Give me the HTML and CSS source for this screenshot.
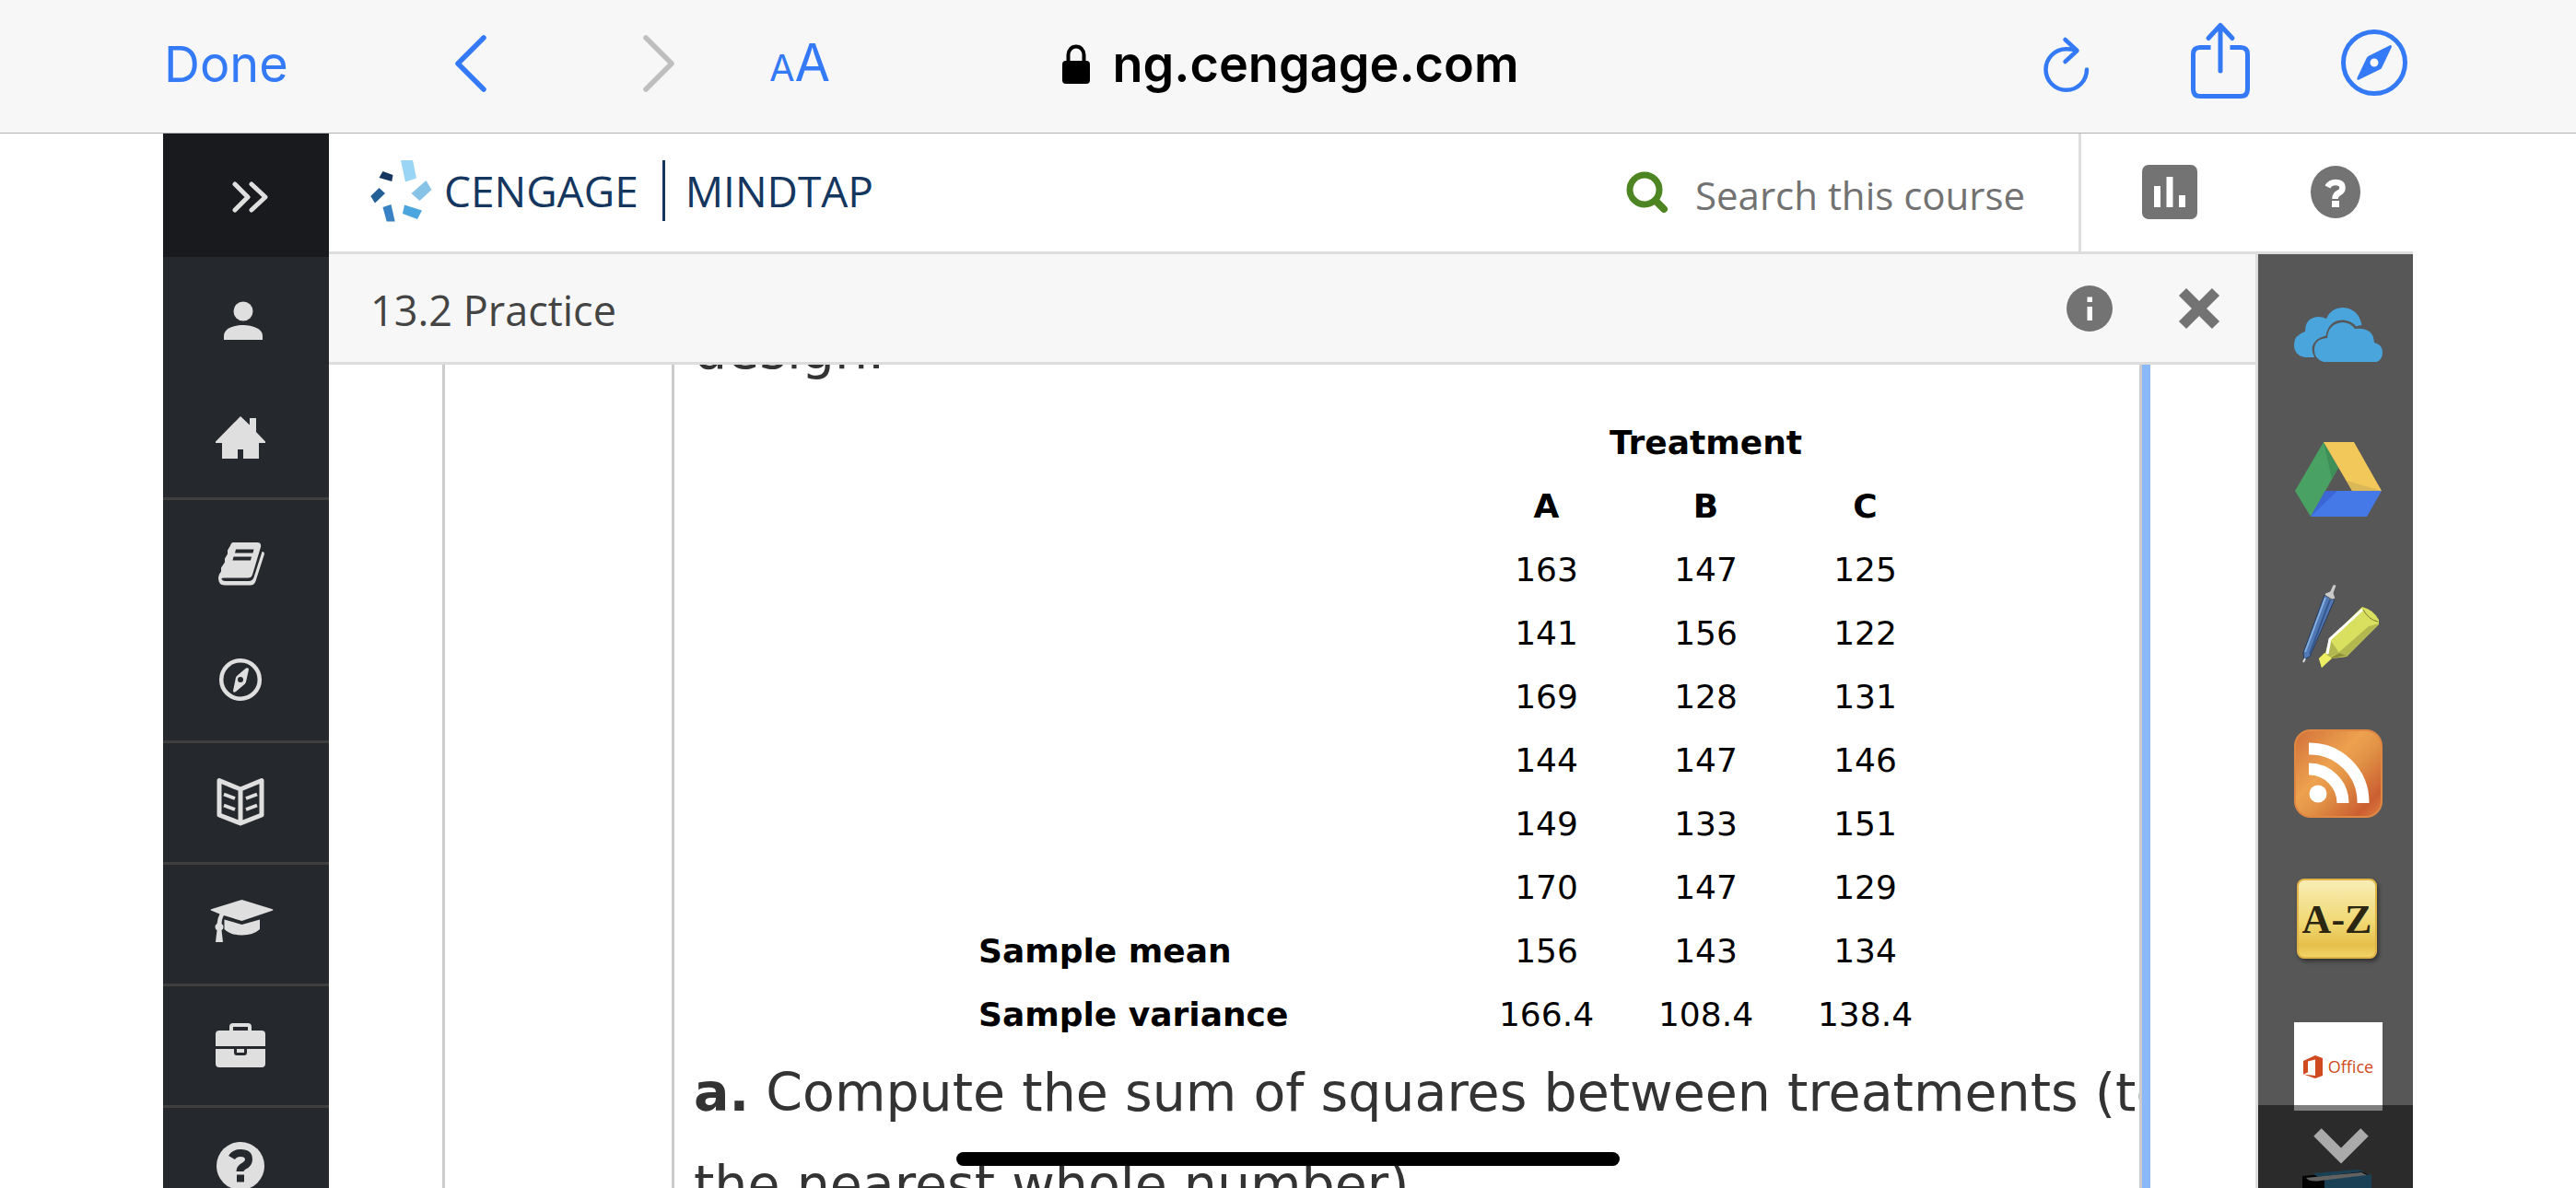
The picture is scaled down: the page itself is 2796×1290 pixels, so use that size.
FILE: index.html
```html
<!DOCTYPE html>
<html lang="en">
<head>
<meta charset="utf-8">
<meta name="viewport" content="width=device-width, initial-scale=1">
<title>13.2 Practice</title>
<link rel="stylesheet" href="styles.css">
</head>
<body>
<div class="screen">
  <header class="browser-bar">
    <div class="browser-left">
      <button class="bar-button done" type="button">Done</button>
      <button class="bar-button back" type="button" aria-label="Back">
        <svg width="40" height="66" viewBox="0 0 40 66"><path d="M35 5L7 33l28 28" fill="none" stroke="currentColor" stroke-width="5.500" stroke-linecap="round" stroke-linejoin="round"/></svg>
      </button>
      <button class="bar-button forward" type="button" aria-label="Forward" disabled>
        <svg width="40" height="66" viewBox="0 0 40 66"><path d="M6 5l28 28L6 61" fill="none" stroke="currentColor" stroke-width="5.500" stroke-linecap="round" stroke-linejoin="round"/></svg>
      </button>
      <button class="bar-button text-size" type="button" aria-label="Text size"><span class="small-a">A</span>A</button>
    </div>
    <div class="address">
      <svg width="30" height="44" viewBox="0 0 30 44"><path d="M6.500 20V11.500a8.500 9 0 0 1 17 0V20" fill="none" stroke="#000" stroke-width="4"/><rect y="18" width="30" height="25" rx="4"/></svg>
      <span>ng.cengage.com</span>
    </div>
    <div class="browser-right">
      <button class="bar-button" type="button" aria-label="Reload">
        <svg width="50" height="82" viewBox="0 0 50 82" fill="none" stroke="currentColor" stroke-width="4.500" stroke-linecap="round" stroke-linejoin="round"><path d="M47 47.500A22.250 22.250 0 1 1 24.750 25.250q6 0 11 1.250"/><path d="M23.500 15L36.500 27 23.500 39"/></svg>
      </button>
      <button class="bar-button share" type="button" aria-label="Share">
        <svg width="64" height="82" viewBox="0 0 64 82" fill="none" stroke="currentColor" stroke-width="5" stroke-linecap="round" stroke-linejoin="round"><path d="M21.500 23.500H10q-7.500 0-7.500 7.500v38q0 7.500 7.500 7.500h44q7.500 0 7.500-7.500V31q0-7.500-7.500-7.500H42.500" stroke-linecap="butt"/><path d="M32 49V-.5M19 13.500L32-.5l13 14"/></svg>
      </button>
      <button class="bar-button" type="button" aria-label="Open in Safari">
        <svg width="74" height="74" viewBox="0 0 74 74"><circle cx="37" cy="36" r="33.500" fill="none" stroke="currentColor" stroke-width="5"/><path fill="currentColor" fill-rule="evenodd" d="M54.500 17q2 0 1.200 2.500L45 42 44 43 20.500 54.500q-3 1-2-2L29 30.500l1.500-1.500zM37 31.500a4.500 4.500 0 1 0 0 9a4.500 4.500 0 0 0 0-9z"/></svg>
      </button>
    </div>
  </header>

  <div class="app">
    <nav class="sidebar" aria-label="Course">
      <button class="side-toggle" type="button" aria-label="Expand menu">
        <svg width="42" height="36" viewBox="0 0 42 36" fill="none" stroke="currentColor" stroke-width="5" stroke-linecap="round" stroke-linejoin="round"><path d="M4 4l14 14L4 32M22 4l15 14-15 14"/></svg>
      </button>
      <a class="side-item" href="#profile" aria-label="Profile"><svg viewBox="0 0 72 72"><circle cx="39" cy="29" r="10.500"/><path d="M18 60v-4.500C18 48 29 44 39 44s21 4 21 11.500V60z"/></svg></a>
      <a class="side-item ruled" href="#home" aria-label="Home"><svg viewBox="0 0 72 72"><path d="M36 12l10 9.500V14h7v15l10 10.500V41h-7v17H39V48h-6v10H16V41H9v-1.500z"/></svg></a>
      <a class="side-item" href="#book" aria-label="Book"><svg viewBox="0 0 72 72"><path fill-rule="evenodd" d="M28 16h26q5 0 4 5L49 51q-1 3.500-5 3.500H18q-3 0-2.500 1.500 1 2 4 2H45q4 0 5.500-4L59.500 26q2.500-.5 2.500 2.500L52.500 58q-1.500 4.500-6 4.500H19q-7 0-7-8 0-1 1-4l2-3v-4l4-6v-4l3-5v-4l3-5q1-3.500 3-3.500zM31 23.500l-1 4h19.500l1-4zm-2.500 8l-1 4H47l1-4z"/></svg></a>
      <a class="side-item ruled" href="#explore" aria-label="Explore"><svg viewBox="0 0 72 72"><circle cx="36" cy="34" r="20.800" fill="none" stroke="currentColor" stroke-width="4.500"/><path fill-rule="evenodd" d="M42 21.500q3-1 3 1.500l-3 13.500-1 2L31 47q-3 2-3-1l3-14.500 1-1.500zM36 31a3 3 0 1 0 0 6a3 3 0 0 0 0-6z"/></svg></a>
      <a class="side-item ruled" href="#reader" aria-label="Reader"><svg viewBox="0 0 72 72" fill="none" stroke="currentColor" stroke-linejoin="round"><path fill="none" stroke-width="5" d="M13 11.500L36 21l23-9.500V49L36 58 13 49zM36 21v37"/><path fill="none" stroke-width="4" d="M18 26.500L30 31M18 38.500L30 43M54 26.500L42 31M54 38.500L42 43"/></svg></a>
      <a class="side-item ruled" href="#study" aria-label="Study"><svg viewBox="0 0 72 72"><path d="M37.500 9L70 19q3 1 0 2L37.500 32 18 26q-2 3-2.500 9a4 4 0 0 1 0 7L17 55H9l1.500-13a4 4 0 0 1 0-7q.5-6 3-10.500L5 21q-3-1 0-2z"/><path d="M18.500 30.500l19 5.500L57 30.500V41q-7 6.500-19.500 6.500T18.500 41z"/></svg></a>
      <a class="side-item ruled" href="#career" aria-label="Career"><svg viewBox="0 0 72 72"><path fill-rule="evenodd" d="M9 36V23q0-4 4-4h11v-4q0-4 4-4h16q4 0 4 4v4h11q4 0 4 4v13zM28 19h16v-4H28z"/><path d="M9 39h20v4q0 3 3 3h8q3 0 3-3v-4h20v16q0 4-4 4H13q-4 0-4-4z"/><path d="M32 39h8v4h-8z"/></svg></a>
      <a class="side-item" href="#help" aria-label="Help"><svg viewBox="0 0 72 72"><circle cx="36" cy="33" r="26"/><path d="M26.500 24q3-5 9.500-5 9 0 9 7 0 4.500-5 7-4.500 2.500-4.500 6" fill="none" stroke="#25282d" stroke-width="8"/><path d="M32 42.500h8v8h-8z" fill="#25282d"/></svg></a>
    </nav>

    <div class="workspace">
      <header class="course-header">
        <a class="brand" href="#mindtap">
          <svg width="68" height="67" viewBox="0 0 68 67"><path fill="#9ad5f5" d="M33 0h13l4 19.500L38 23.500z"/><path fill="#15375f" d="M13.500 12L24.500 16l-1.200 7L9.500 19z"/><path fill="#245f96" d="M9.500 30l6.500 6-11 10.500L.3 39z"/><path fill="#87c3e6" d="M60.500 22l6 10-13 12-9-8z"/><path fill="#3781c4" d="M13.500 51l9-3 4.200 18.500h-9z"/><path fill="#4ba6dd" d="M37 48.500l19 6L51 64l-16-6z"/></svg>
          <span>CENGAGE</span>
          <span class="brand-rule"></span>
          <span>MINDTAP</span>
        </a>
        <form class="search">
          <svg width="48" height="48" viewBox="0 0 48 48" fill="none" stroke="#4c8522"><circle cx="21" cy="21" r="16" stroke-width="7"/><path d="M33 33l9 9" stroke-width="8" stroke-linecap="round"/></svg>
          <input type="search" aria-label="Search this course" placeholder="Search this course">
        </form>
        <div class="header-tools">
          <button type="button" aria-label="Progress">
            <svg width="60" height="60" viewBox="0 0 60 60"><rect width="60" height="59" rx="7" fill="#737373"/><path fill="#fff" d="M13 23h7v23h-7zM26.500 13h7v33h-7zM40 33h7v13h-7z"/></svg>
          </button>
          <button type="button" aria-label="Help">
            <svg width="56" height="58" viewBox="0 0 56 58"><ellipse cx="28" cy="28.500" rx="27" ry="28.500" fill="#737373"/><path d="M19.500 23q2.500-5 8.500-5 7.500 0 7.500 6 0 3.500-4 5.500T27.500 36" fill="none" stroke="#fff" stroke-width="6.500"/><path d="M24 38h8v7h-8z" fill="#fff"/></svg>
          </button>
        </div>
      </header>

      <div class="activity">
        <main class="activity-main">
          <div class="activity-bar">
            <h1>13.2 Practice</h1>
            <button type="button" aria-label="Information">
              <svg width="50" height="50" viewBox="0 0 50 50"><circle cx="25" cy="25" r="25" fill="#737373"/><path fill="#fff" d="M22.500 12.500h5.500v5.500h-5.500zM22.500 23h5.500v15h-5.500z"/></svg>
            </button>
            <button type="button" aria-label="Close">
              <svg width="46" height="46" viewBox="0 0 46 46"><path d="M5 5l36 36M41 5L5 41" stroke="#737373" stroke-width="11.500"/></svg>
            </button>
          </div>
          <div class="page">
            <article class="question">
              <div class="scrolled">
                <p>design.</p>
                <table>
                  <thead>
                    <tr><td></td><th colspan="3" scope="colgroup">Treatment</th></tr>
                    <tr><td></td><th scope="col">A</th><th scope="col">B</th><th scope="col">C</th></tr>
                  </thead>
                  <tbody>
                    <tr><td></td><td>163</td><td>147</td><td>125</td></tr>
                    <tr><td></td><td>141</td><td>156</td><td>122</td></tr>
                    <tr><td></td><td>169</td><td>128</td><td>131</td></tr>
                    <tr><td></td><td>144</td><td>147</td><td>146</td></tr>
                    <tr><td></td><td>149</td><td>133</td><td>151</td></tr>
                    <tr><td></td><td>170</td><td>147</td><td>129</td></tr>
                    <tr><th scope="row">Sample mean</th><td>156</td><td>143</td><td>134</td></tr>
                    <tr><th scope="row">Sample variance</th><td>166.4</td><td>108.4</td><td>138.4</td></tr>
                  </tbody>
                </table>
                <p><b>a.</b> Compute the sum of squares between treatments (to<br>the nearest whole number)</p>
              </div>
            </article>
          </div>
        </main>

        <aside class="tools" aria-label="Apps">
          <a href="#onedrive" aria-label="OneDrive"><svg viewBox="0 0 96 96" fill="#4aa5dc"><path d="M22 73H12Q0 71 0 59q0-10 12-14 0-15 14-16 5 0 9 2 5-12 18-12 17 1 20.500 19-3 0-6 1.500-5-6-14-7-16 0-19 17-13 3-15 13 0 6 2.500 10z"/><path d="M32 78q-10-3-10-13 0-12 14-13 1-15 16-17 9 0 14 7 20-2 21 15 9 2 9 11 0 7-6 10z"/></svg></a>
          <a href="#drive" aria-label="Google Drive"><svg viewBox="0 0 96 96"><path fill="#49a163" d="M32 6l16 28-30 53L1 59z"/><path fill="#3e8f58" d="M32 6l16 28-7 12z"/><path fill="#f2c85b" d="M32 6h33l30 53H63z"/><path fill="#dab858" d="M57 48l38 11H63z"/><path fill="#4679e8" d="M34 59h61L79 87H18z"/><path fill="#3c66d4" d="M34 59h13L18 87z"/></svg></a>
          <a href="#notes" aria-label="Notes"><svg viewBox="0 0 96 96"><path fill="#5079b5" stroke="#263b5c" d="M33 13l11 5-27 62-6 3-1-7z"/><path stroke="#83aee0" stroke-width="2" d="M34 16L12 75"/><path stroke="#34558a" stroke-width="2" d="M39 18L17 77"/><path fill="#c9c9c9" stroke="#555" d="M34 11l5-2 3-7q3-1 4 1l-3 8 2 6-4 1-8-5z"/><path stroke="#ddd" stroke-width="2" d="M12 82l-2 4"/><path fill="#d9df5e" d="M74 26q12 3 18 14v5L57 80l-16 2-3 0-8 10-3-10 7-6 4-15z"/><path fill="#b2b750" d="M92 44L57 80l-9-4 33-29q5-1 11-3zM38 60l11 16-14 6z"/><path fill="#8e9138" d="M49 76l8 3-21 4z"/><path stroke="#fff" stroke-width="3" fill="none" d="M74 29L39 61l-3 16"/><path fill="none" stroke="#777b30" d="M75 29q6 11 16 13"/><path fill="#eeee63" d="M27 82l6-6 8 6-11 10z"/></svg></a>
          <a href="#rss" aria-label="RSS"><svg viewBox="0 0 96 96"><defs><linearGradient id="rss-fill" x1="0" y1="0" x2="1" y2="1"><stop offset="0" stop-color="#d2703a"/><stop offset=".4" stop-color="#eda24f"/><stop offset=".55" stop-color="#e39447"/><stop offset=".85" stop-color="#cb5e31"/><stop offset="1" stop-color="#df8141"/></linearGradient></defs><rect x="1" y="1" width="94" height="94" rx="17" fill="url(#rss-fill)" stroke="#e08843" stroke-width="2"/><g fill="none" stroke="#fff" stroke-width="13"><path d="M16 21a58 58 0 0 1 59 59M16 43a37 37 0 0 1 37 37"/></g><circle cx="26" cy="70" r="9.500" fill="#fff"/></svg></a>
          <a href="#glossary" aria-label="Glossary" class="glossary"><span>A-Z</span></a>
          <a href="#office" aria-label="Office" class="office"><svg width="21" height="25" viewBox="0 0 21 25"><path fill="#d04a20" fill-rule="evenodd" d="M0 6L13 0l8 3v19l-8 3L0 20.500l13 1.500V4.500L5 6.500v12L0 20.500z"/></svg><span>Office</span></a>
          <a href="#library" aria-label="Library"><svg viewBox="0 0 96 96"><path fill="#050505" d="M9 8L70 2l14 6v88H9z"/><path fill="#3580ad" d="M20 5l50-4 6 2-50 6zM33 12l51-6v90H33z"/><path fill="#c4c4c4" d="M13 10l60-6 6 3-50 6q-12 2-16-3z"/></svg></a>
          <button class="tools-more" type="button" aria-label="More apps"><svg width="60" height="39" viewBox="0 0 60 39"><path d="M4.500 4.500L30 30 55.500 4.500" fill="none" stroke="#aaa" stroke-width="12"/></svg></button>
        </aside>
      </div>
    </div>
  </div>
  <div class="home-indicator"></div>
</div>
</body>
</html>
```
FILE: styles.css
```css
* { box-sizing: border-box; }

body {
  margin: 0;
  background: #fff;
  font-family: "Open Sans", "Noto Sans", sans-serif;
}

button {
  margin: 0;
  padding: 0;
  border: 0;
  background: none;
  color: inherit;
  font: inherit;
  cursor: pointer;
}

a { color: inherit; text-decoration: none; }
svg { display: block; flex: none; overflow: visible; }

.screen {
  display: flex;
  flex-direction: column;
  height: 100vh;
  overflow: hidden;
}

/* Browser toolbar */
.browser-bar {
  display: grid;
  grid-template-columns: 1fr auto 1fr;
  align-items: center;
  flex: none;
  height: 145px;
  padding: 0 182px 6px 178px;
  border-bottom: 1px solid #b2b2b2;
  background: #f7f7f7;
  font-family: Inter, "Liberation Sans", sans-serif;
  font-size: 54px;
  line-height: 72px;
}
.browser-left,
.browser-right,
.address { display: flex; align-items: center; }
.browser-right { justify-content: flex-end; }
.bar-button { color: #347af6; }
.bar-button:disabled { color: #bfbfbf; }
.done { width: 312px; padding-top: 2px; text-align: left; }
.forward { margin: 0 100px 0 165px; }
.text-size { padding-top: 4px; font-size: 56px; }
.small-a { font-size: 40px; }
.address { gap: 24px; padding: 2px 0 0 10px; font-weight: 600; }
.share { margin: 0 98px 0 110px; }

/* App frame */
.app {
  display: flex;
  flex: 1;
  min-height: 0;
  padding: 0 177px;
}
.sidebar {
  flex: none;
  width: 180px;
  overflow: hidden;
  background: #25282d;
  color: #dfdfdf;
}
.side-toggle,
.side-item {
  display: flex;
  align-items: center;
  justify-content: center;
  width: 100%;
}
.side-toggle {
  height: 134px;
  padding: 4px 0 0 10px;
  background: #191a1d;
}
.side-item { height: 132px; padding-right: 12px; }
.side-item svg { width: 72px; height: 72px; fill: currentColor; }
.side-item.ruled { border-bottom: 3px solid #403f40; }

.workspace {
  display: flex;
  flex-direction: column;
  flex: 1;
  min-width: 0;
}
.course-header {
  display: flex;
  flex: none;
  height: 131px;
  border-bottom: 3px solid #ddd;
}
.brand {
  display: flex;
  align-items: center;
  padding: 0 0 4px 45px;
  color: #15375f;
  font-size: 46px;
  line-height: 64px;
}
.brand svg { margin-right: 12px; }
.brand-rule {
  width: 3px;
  height: 66px;
  margin: 0 22px 0 26px;
  background: #15375f;
}
.search {
  display: flex;
  align-items: center;
  gap: 28px;
  margin-left: auto;
}
.search input {
  width: 416px;
  padding: 6px 0 0;
  border: 0;
  outline: 0;
  background: none;
  color: #727272;
  font: 42px/64px "Open Sans", "Noto Sans", sans-serif;
}
.search input::placeholder { color: #727272; opacity: 1; }
.header-tools {
  display: flex;
  align-items: center;
  justify-content: space-between;
  width: 363px;
  padding: 0 56px 0 66px;
  border-left: 3px solid #ddd;
}

/* Activity */
.activity { display: flex; flex: 1; min-height: 0; }
.activity-main {
  display: flex;
  flex-direction: column;
  flex: 1;
  min-width: 0;
  border-right: 3px solid #ddd;
}
.activity-bar {
  display: flex;
  align-items: center;
  flex: none;
  gap: 71px;
  height: 120px;
  padding: 0 38px 0 45px;
  border-bottom: 3px solid #ddd;
  background: #f7f7f7;
}
.activity-bar h1 {
  flex: 1;
  margin: 0;
  padding-top: 4px;
  color: #444;
  font-size: 45px;
  font-weight: 400;
  line-height: 64px;
}
.page {
  display: flex;
  flex: 1;
  min-height: 0;
  margin: 0 114px 0 123px;
  padding-left: 246px;
  border-left: 3px solid #ccc;
  border-right: 9px solid #8bb8f8;
}
.question {
  flex: 1;
  min-width: 0;
  padding-left: 21px;
  overflow: hidden;
  border-left: 3px solid #ccc;
  border-right: 3px solid #ccc;
  color: #333;
  font: 57px/100px Verdana, "DejaVu Sans", sans-serif;
  white-space: nowrap;
}
/* the page is scrolled part-way through its first visible line */
.scrolled { margin-top: -66px; }
.question p { margin: 0; }
.question table {
  margin: 16px 0 0 309px;
  border-collapse: collapse;
  color: #000;
  font-size: 36px;
  line-height: 69px;
}
.question th,
.question td { width: 173px; height: 69px; padding: 0; text-align: center; }
.question tr > :first-child { width: 530px; text-align: left; }

/* App rail */
.tools {
  position: relative;
  display: flex;
  flex-direction: column;
  align-items: center;
  flex: none;
  gap: 63px;
  width: 168px;
  padding: 39px 0 0 6px;
  overflow: hidden;
  background: #575757;
}
.tools > a { flex: none; width: 96px; height: 96px; }
.tools > a > svg[viewBox="0 0 96 96"] { width: 96px; height: 96px; }
.glossary { padding: 3px 6px 6px 3px; }
.glossary span {
  display: block;
  height: 87px;
  border: 2px solid #e0b347;
  border-radius: 8px;
  background: linear-gradient(#f8edb5, #f0d872 55%, #e6bf4b 85%, #f1d467);
  box-shadow: 2px 3px 4px #333;
  color: #2b2611;
  font: bold 44px/86px "Liberation Serif", serif;
  text-align: center;
}
.tools > .office {
  display: flex;
  align-items: center;
  justify-content: center;
  gap: 6px;
  background: #fff;
  color: #d04a20;
  font-size: 18px;
}
.tools-more {
  position: absolute;
  inset: auto 0 0;
  display: flex;
  justify-content: center;
  height: 90px;
  padding: 25px 0 0 12px;
  background: rgba(0, 0, 0, .5);
}

.home-indicator {
  position: fixed;
  bottom: 24px;
  left: 50%;
  width: 720px;
  height: 15px;
  margin-left: -360px;
  border-radius: 8px;
  background: #000;
}
```
